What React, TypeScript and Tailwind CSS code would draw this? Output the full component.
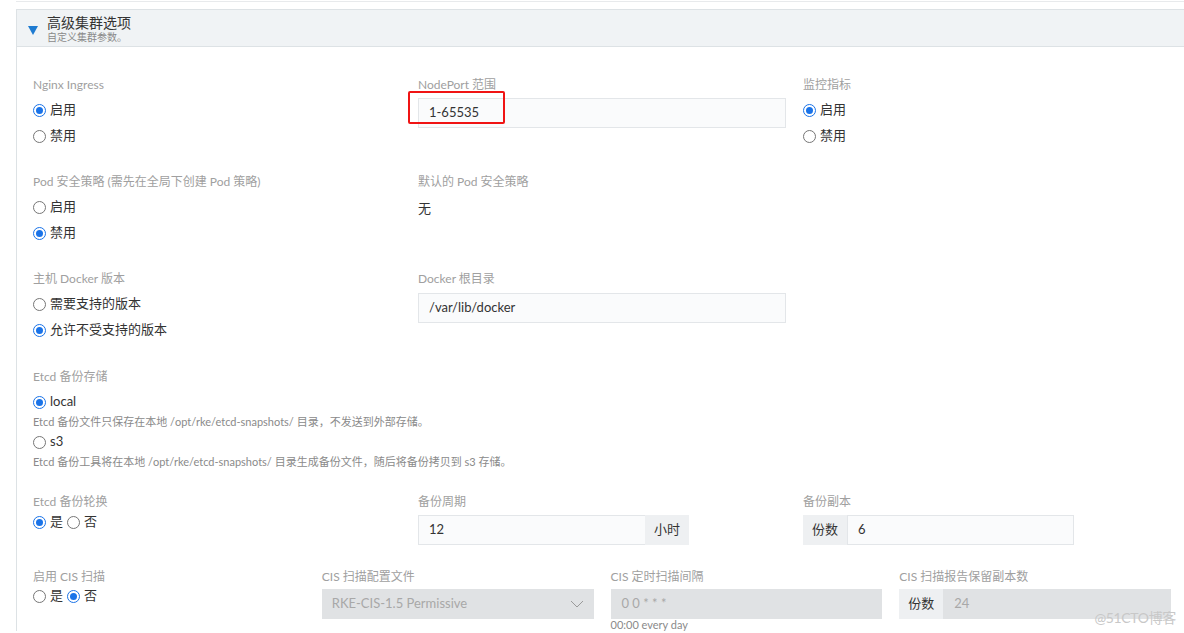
import React from 'react';
import clsx from 'clsx';

const font = { fontFamily: 'Lato, "Noto Sans CJK SC", sans-serif' };

const Radio: React.FC<{ checked?: boolean; label: string; inline?: boolean }> = ({ checked, label, inline }) => (
  <label className={clsx('flex items-center text-[13px] text-[#333]', inline ? 'h-[26px] mr-1' : 'h-[26px]')}>
    <span
      className={clsx(
        'w-[13px] h-[13px] rounded-full border flex items-center justify-center mr-[4px] shrink-0',
        checked ? 'border-[#1a73e8] border-[1.5px]' : 'border-[#767676]'
      )}
    >
      {checked && <span className="w-[7px] h-[7px] rounded-full bg-[#1a73e8]" />}
    </span>
    {label}
  </label>
);

const Label: React.FC<{ children: React.ReactNode }> = ({ children }) => (
  <div className="text-xs leading-4 text-[#a0a0a0]">{children}</div>
);

const Input: React.FC<{ value: string; disabled?: boolean; className?: string }> = ({ value, disabled, className }) => (
  <div
    className={clsx(
      'h-[30px] flex items-center px-[10px] text-[13px] border',
      disabled ? 'bg-[#e0e2e4] border-[#e0e2e4] text-[#a8a8a8]' : 'bg-[#fafbfc] border-[#e3e6e9] text-[#333]',
      className
    )}
  >
    {value}
  </div>
);

const Addon: React.FC<{ children: React.ReactNode }> = ({ children }) => (
  <div className="h-[30px] w-[44px] shrink-0 flex items-center justify-center bg-[#eef0f2] text-[13px] text-[#333]">
    {children}
  </div>
);

export default function App() {
  return (
    <div className="relative bg-white w-[1184px] h-[633px] overflow-hidden" style={font}>
      <div className="ml-4 h-[2px] border-b border-[#e8eaec]" />
      <div className="ml-4 mt-[7px] border-l border-t border-[#dde2e5] w-[1180px]">
        <div className="h-[37px] bg-[#f0f3f5] border-b border-[#dde2e5] flex items-center pl-[11px]">
          <svg width="10" height="9" viewBox="0 0 10 9" className="mt-[4px]">
            <path d="M0 0 H10 L5 9 Z" fill="#1e7bd1" />
          </svg>
          <div className="ml-[9px] flex flex-col">
            <span className="text-sm leading-[17px] text-[#333]">高级集群选项</span>
            <span className="text-[10px] leading-[12px] text-[#8a8a8a]">自定义集群参数。</span>
          </div>
        </div>

        <div className="pl-4 pr-[13px] pt-[30px] w-[1167px]">
          {/* row 1 */}
          <div className="grid grid-cols-[368px_368px_368px] gap-x-[17px] mb-[25px]">
            <div>
              <Label>Nginx Ingress</Label>
              <div className="mt-1">
                <Radio checked label="启用" />
                <Radio label="禁用" />
              </div>
            </div>
            <div>
              <Label>NodePort 范围</Label>
              <div className="relative mt-[5px]">
                <Input value="1-65535" />
                <div className="absolute left-[-10px] top-[-7px] w-[97px] h-[33px] border-2 border-[#f01414] rounded-[2px]" />
              </div>
            </div>
            <div>
              <Label>监控指标</Label>
              <div className="mt-1">
                <Radio checked label="启用" />
                <Radio label="禁用" />
              </div>
            </div>
          </div>

          {/* row 2 */}
          <div className="grid grid-cols-[368px_368px_368px] gap-x-[17px] mb-[25px]">
            <div>
              <Label>Pod 安全策略 (需先在全局下创建 Pod 策略)</Label>
              <div className="mt-1">
                <Radio label="启用" />
                <Radio checked label="禁用" />
              </div>
            </div>
            <div>
              <Label>默认的 Pod 安全策略</Label>
              <div className="mt-[9px] text-[13px] text-[#333]">无</div>
            </div>
            <div />
          </div>

          {/* row 3 */}
          <div className="grid grid-cols-[368px_368px_368px] gap-x-[17px] mb-[26px]">
            <div>
              <Label>主机 Docker 版本</Label>
              <div className="mt-1">
                <Radio label="需要支持的版本" />
                <Radio checked label="允许不受支持的版本" />
              </div>
            </div>
            <div>
              <Label>Docker 根目录</Label>
              <div className="mt-[6px]">
                <Input value="/var/lib/docker" />
              </div>
            </div>
            <div />
          </div>

          {/* row 4 */}
          <div className="mb-[25px]">
            <Label>Etcd 备份存储</Label>
            <div className="mt-1">
              <Radio checked label="local" />
              <div className="text-[11px] leading-[14px] text-[#8a8a8a]">
                Etcd 备份文件只保存在本地 /opt/rke/etcd-snapshots/ 目录，不发送到外部存储。
              </div>
              <Radio label="s3" />
              <div className="text-[11px] leading-[14px] text-[#8a8a8a]">
                Etcd 备份工具将在本地 /opt/rke/etcd-snapshots/ 目录生成备份文件，随后将备份拷贝到 s3 存储。
              </div>
            </div>
          </div>

          {/* row 5 */}
          <div className="grid grid-cols-[368px_368px_368px] gap-x-[17px] mb-6">
            <div>
              <Label>Etcd 备份轮换</Label>
              <div className="flex -mt-px">
                <Radio inline checked label="是" />
                <Radio inline label="否" />
              </div>
            </div>
            <div>
              <Label>备份周期</Label>
              <div className="mt-[5px] flex w-[271px]">
                <Input value="12" className="flex-1 border-r-0" />
                <Addon>小时</Addon>
              </div>
            </div>
            <div>
              <Label>备份副本</Label>
              <div className="mt-[5px] flex w-[271px]">
                <Addon>份数</Addon>
                <Input value="6" className="flex-1" />
              </div>
            </div>
          </div>

          {/* row 6 */}
          <div className="grid grid-cols-4 gap-x-[17px]">
            <div>
              <Label>启用 CIS 扫描</Label>
              <div className="flex -mt-[2px]">
                <Radio inline label="是" />
                <Radio inline checked label="否" />
              </div>
            </div>
            <div>
              <Label>CIS 扫描配置文件</Label>
              <div className="mt-[4px] h-[30px] bg-[#e0e2e4] flex items-center justify-between px-[10px] text-[13px] text-[#a8a8a8]">
                <span>RKE-CIS-1.5 Permissive</span>
                <svg width="14" height="8" viewBox="0 0 14 8" fill="none">
                  <path d="M1 1 L7 7 L13 1" stroke="#9a9a9a" strokeWidth="1" />
                </svg>
              </div>
            </div>
            <div>
              <Label>CIS 定时扫描间隔</Label>
              <div className="mt-[4px]">
                <Input disabled value="0 0 * * *" />
              </div>
              <div className="text-[11px] leading-[12px] text-[#8a8a8a]">00:00 every day</div>
            </div>
            <div>
              <Label>CIS 扫描报告保留副本数</Label>
              <div className="mt-[4px] flex">
                <Addon>份数</Addon>
                <Input disabled value="24" className="flex-1" />
              </div>
            </div>
          </div>
        </div>
      </div>
      <div className="absolute right-[8px] top-[607px] text-[14px] text-[#c8c8c8] tracking-tight">@51CTO博客</div>
    </div>
  );
}
